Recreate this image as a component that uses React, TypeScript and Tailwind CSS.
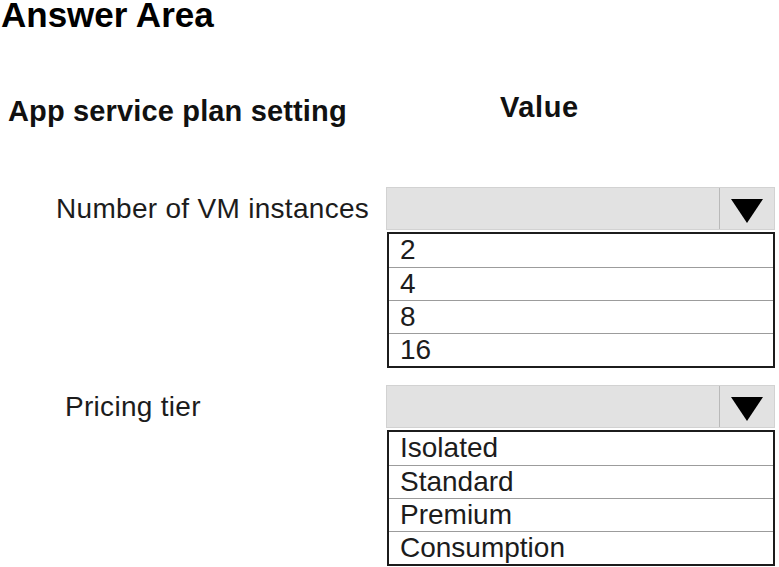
const vmOptions = ['2', '4', '8', '16']
const tierOptions = ['Isolated', 'Standard', 'Premium', 'Consumption']

function Arrow() {
  return (
    <svg width="32" height="24" viewBox="0 0 32 24" className="block">
      <polygon points="0,0 32,0 16,24" fill="#000" />
    </svg>
  )
}

function Dropdown({ options }: { options: string[] }) {
  return (
    <div className="w-[389px]">
      <div className="flex h-[43px] border border-[#d2d2d2] bg-[#e2e2e2]">
        <div className="flex-1 border-r border-[#b9b9b9]" />
        <div className="flex w-[54px] items-center justify-center pt-[4px]">
          <Arrow />
        </div>
      </div>
      <div className="mt-[2px] ml-[1px] border-2 border-[#1c1c1c] bg-white">
        {options.map((opt, i) => (
          <div
            key={opt}
            className={`h-[33px] pl-[11px] text-[28px] leading-[32px] text-[#1c1c1c] ${i > 0 ? 'border-t border-[#9c9c9c]' : ''}`}
          >
            {opt}
          </div>
        ))}
      </div>
    </div>
  )
}

function SettingRow({ label, indent, options }: { label: string; indent: string; options: string[] }) {
  return (
    <div className="flex">
      <div className={`flex h-[43px] w-[386px] items-center ${indent}`}>
        <span className="text-[28px] leading-[28px] tracking-[0.3px] text-[#1c1c1c]">{label}</span>
      </div>
      <Dropdown options={options} />
    </div>
  )
}

export default function App() {
  return (
    <div
      className="h-[567px] w-[779px] overflow-hidden bg-white"
      style={{ fontFamily: '"Liberation Sans", Arial, sans-serif' }}
    >
      <h1 className="pl-[1px] text-[35px] font-bold leading-[29px] text-black">Answer Area</h1>

      <div className="mt-[64px] flex items-start">
        <div className="mt-[4px] w-[500px] pl-[8px] text-[29px] font-bold leading-[29px] tracking-[0.15px] text-[#111]">
          App service plan setting
        </div>
        <div className="text-[29px] font-bold leading-[29px] tracking-[0.6px] text-[#111]">Value</div>
      </div>

      <div className="mt-[61px]">
        <SettingRow label="Number of VM instances" indent="pl-[56px]" options={vmOptions} />
      </div>
      <div className="mt-[17px]">
        <SettingRow label="Pricing tier" indent="pl-[65px]" options={tierOptions} />
      </div>
    </div>
  )
}
